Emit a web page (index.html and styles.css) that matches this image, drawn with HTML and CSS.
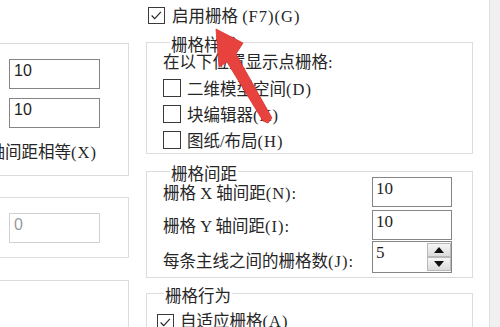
FILE: index.html
```html
<!DOCTYPE html>
<html lang="zh-CN">
<head>
<meta charset="utf-8">
<title>草图设置 - 捕捉和栅格</title>
<link rel="stylesheet" href="styles.css">
</head>
<body>
<div class="dialog">
  <div class="col-left">
    <fieldset class="group g-snap">
      <legend>捕捉间距</legend>
      <div class="frow"><span class="flabel">捕捉 X 轴间距(P):</span><div class="field sans">10</div></div>
      <div class="frow r2"><span class="flabel">捕捉 Y 轴间距(C):</span><div class="field sans">10</div></div>
      <div class="eqrow"><span class="cb on"><svg viewBox="0 0 17 17" width="15" height="15"><path d="M3 8.5 L6.5 12 L13.5 4.5" fill="none" stroke="#222" stroke-width="1.3"/></svg></span><span>X 轴间距和 Y 轴间距相等<span class="lat">(X)</span></span></div>
    </fieldset>
    <fieldset class="group g-polar">
      <legend>极轴间距</legend>
      <div class="frow"><span class="flabel">极轴距离(D):</span><div class="field sans off">0</div></div>
    </fieldset>
    <fieldset class="group g-type">
      <legend>捕捉类型</legend>
    </fieldset>
  </div>

  <div class="col-right">
    <div class="toprow"><span class="cb on"><svg viewBox="0 0 17 17" width="15" height="15"><path d="M3 8.5 L6.5 12 L13.5 4.5" fill="none" stroke="#222" stroke-width="1.3"/></svg></span><span class="ctext">启用栅格 <span class="lat">(F7)(G)</span></span></div>

    <fieldset class="group g-style">
      <legend>栅格样式</legend>
      <div class="caption">在以下位置显示点栅格<span class="lat">:</span></div>
      <div class="crow"><span class="cb"></span><span>二维模型空间<span class="lat">(D)</span></span></div>
      <div class="crow"><span class="cb"></span><span>块编辑器<span class="lat">(K)</span></span></div>
      <div class="crow"><span class="cb"></span><span>图纸/布局<span class="lat">(H)</span></span></div>
    </fieldset>

    <fieldset class="group g-space">
      <legend>栅格间距</legend>
      <div class="srow"><span class="slabel">栅格 X 轴间距<span class="lat">(N):</span></span><div class="field serif">10</div></div>
      <div class="srow s2"><span class="slabel">栅格 Y 轴间距<span class="lat">(I):</span></span><div class="field serif">10</div></div>
      <div class="srow s3"><span class="slabel">每条主线之间的栅格数<span class="lat">(J):</span></span>
        <div class="field serif spinner"><span class="val">5</span>
          <span class="spin">
            <span class="sbtn"><svg viewBox="0 0 10 6" width="10" height="6"><path d="M0 6 L5 0 L10 6 Z" fill="#111"/></svg></span>
            <span class="sbtn"><svg viewBox="0 0 10 6" width="10" height="6"><path d="M0 0 L10 0 L5 6 Z" fill="#111"/></svg></span>
          </span>
        </div>
      </div>
    </fieldset>

    <fieldset class="group g-behave">
      <legend>栅格行为</legend>
      <div class="brow"><span class="cb on"><svg viewBox="0 0 17 17" width="15" height="15"><path d="M3 8.5 L6.5 12 L13.5 4.5" fill="none" stroke="#222" stroke-width="1.3"/></svg></span><span>自适应栅格<span class="lat">(A)</span></span></div>
      <div class="brow"><span class="cb"></span><span>允许以小于栅格间距的间距再拆分<span class="lat">(B)</span></span></div>
    </fieldset>
  </div>

  <div class="edge"></div>
</div>

<svg class="arrow" viewBox="0 0 500 327" width="500" height="327">
  <polygon points="216,29 243,43 236,54 272,118 268,123 263,121 227,62 219,67" fill="#e8423f" stroke="#d8332f" stroke-width="0.8" stroke-linejoin="round"/>
</svg>
</body>
</html>
```

FILE: styles.css
```css
* { box-sizing: border-box; }
html, body { margin: 0; padding: 0; }
body {
  width: 500px;
  height: 327px;
  overflow: hidden;
  position: relative;
  background: #fff;
  color: #262626;
  font-family: "Liberation Serif", "Noto Sans CJK SC", serif;
  font-size: 16.5px;
}
.lat { letter-spacing: 1px; }
.dialog { display: flex; height: 327px; }

.col-left { flex: none; width: 129px; margin-right: 17px; padding-top: 38px; }
.col-right { flex: none; width: 327px; padding-top: 4px; }
.edge { flex: none; width: 11px; margin-left: 16px; background: #f0f0f0; border-left: 1px solid #e0e0e0; }

.group {
  margin: 0;
  padding: 0;
  border: 1px solid #dcdcdc;
  min-width: 0;
}
.group > legend {
  padding: 6px 1px 0;
  margin-left: 7px;
  line-height: 5px;
  white-space: nowrap;
}

/* left column (clipped by window edge) */
.col-left .group { margin-left: -200px; }
.g-snap { padding: 10px 28px 11px 0; }
.g-polar { margin-top: 16px; padding: 10px 28px 14px 0; }
.g-type { margin-top: 17px; min-height: 120px; }

.frow { display: flex; justify-content: flex-end; align-items: center; white-space: nowrap; }
.frow.r2 { margin-top: 9px; }
.flabel { margin-right: 40px; }
.eqrow {
  display: flex; justify-content: flex-end; align-items: center;
  white-space: nowrap; margin-top: 14px; line-height: 22px; padding-right: 3px;
}
.eqrow .cb { margin-right: 6px; }

.field {
  flex: none;
  height: 30px;
  border: 1px solid #858585;
  background: #fff;
  line-height: 22px;
  white-space: nowrap;
}
.field.sans { width: 91px; padding-left: 4px; font-family: "Liberation Sans", sans-serif; font-size: 16px; color: #1e1e1e; }
.field.sans.off { border-color: #d0d0d0; color: #9a9a9a; }
.field.serif { width: 80px; padding-left: 3px; font-size: 17px; color: #1e1e1e; }

/* checkboxes */
.cb {
  flex: none;
  width: 18px; height: 18px;
  border: 1px solid #3a3a3a;
  background: #fff;
  display: inline-flex; align-items: center; justify-content: center;
}
.cb.on { width: 17px; height: 17px; }

/* right column */
.toprow { display: flex; align-items: center; height: 22px; padding-left: 2px; white-space: nowrap; }
.toprow .ctext { margin-left: 7px; }

.g-style { margin-top: 11px; padding: 3px 20px 0 16px; }
.caption { line-height: 20px; margin: 2px 0; white-space: nowrap; }
.crow { display: flex; align-items: center; height: 26px; white-space: nowrap; }
.crow .cb { margin-right: 6px; }

.g-space { margin-top: 12px; padding: 0 20px 4px 16px; }
.srow { display: flex; justify-content: space-between; align-items: flex-start; white-space: nowrap; }
.slabel { line-height: 22px; margin-top: 6px; }
.srow.s2 { margin-top: 3px; }
.srow.s3 { margin-top: 1px; }
.srow.s3 .slabel { margin-top: 10px; }
.spinner { height: 32px; display: flex; padding-right: 0; }
.spinner .val { flex: 1; }
.spin { display: flex; flex-direction: column; width: 24px; margin: 1px 0; }
.sbtn {
  height: 14px;
  border: 1px solid #b9b9b9;
  background: linear-gradient(#f6f6f6, #dcdcdc);
  display: flex; align-items: center; justify-content: center;
}

.g-behave { margin-top: 10px; padding: 11px 20px 0 10px; }
.brow { display: flex; align-items: center; line-height: 24px; white-space: nowrap; }
.brow .cb { margin-right: 6px; }

.arrow { position: absolute; left: 0; top: 0; pointer-events: none; }
```
